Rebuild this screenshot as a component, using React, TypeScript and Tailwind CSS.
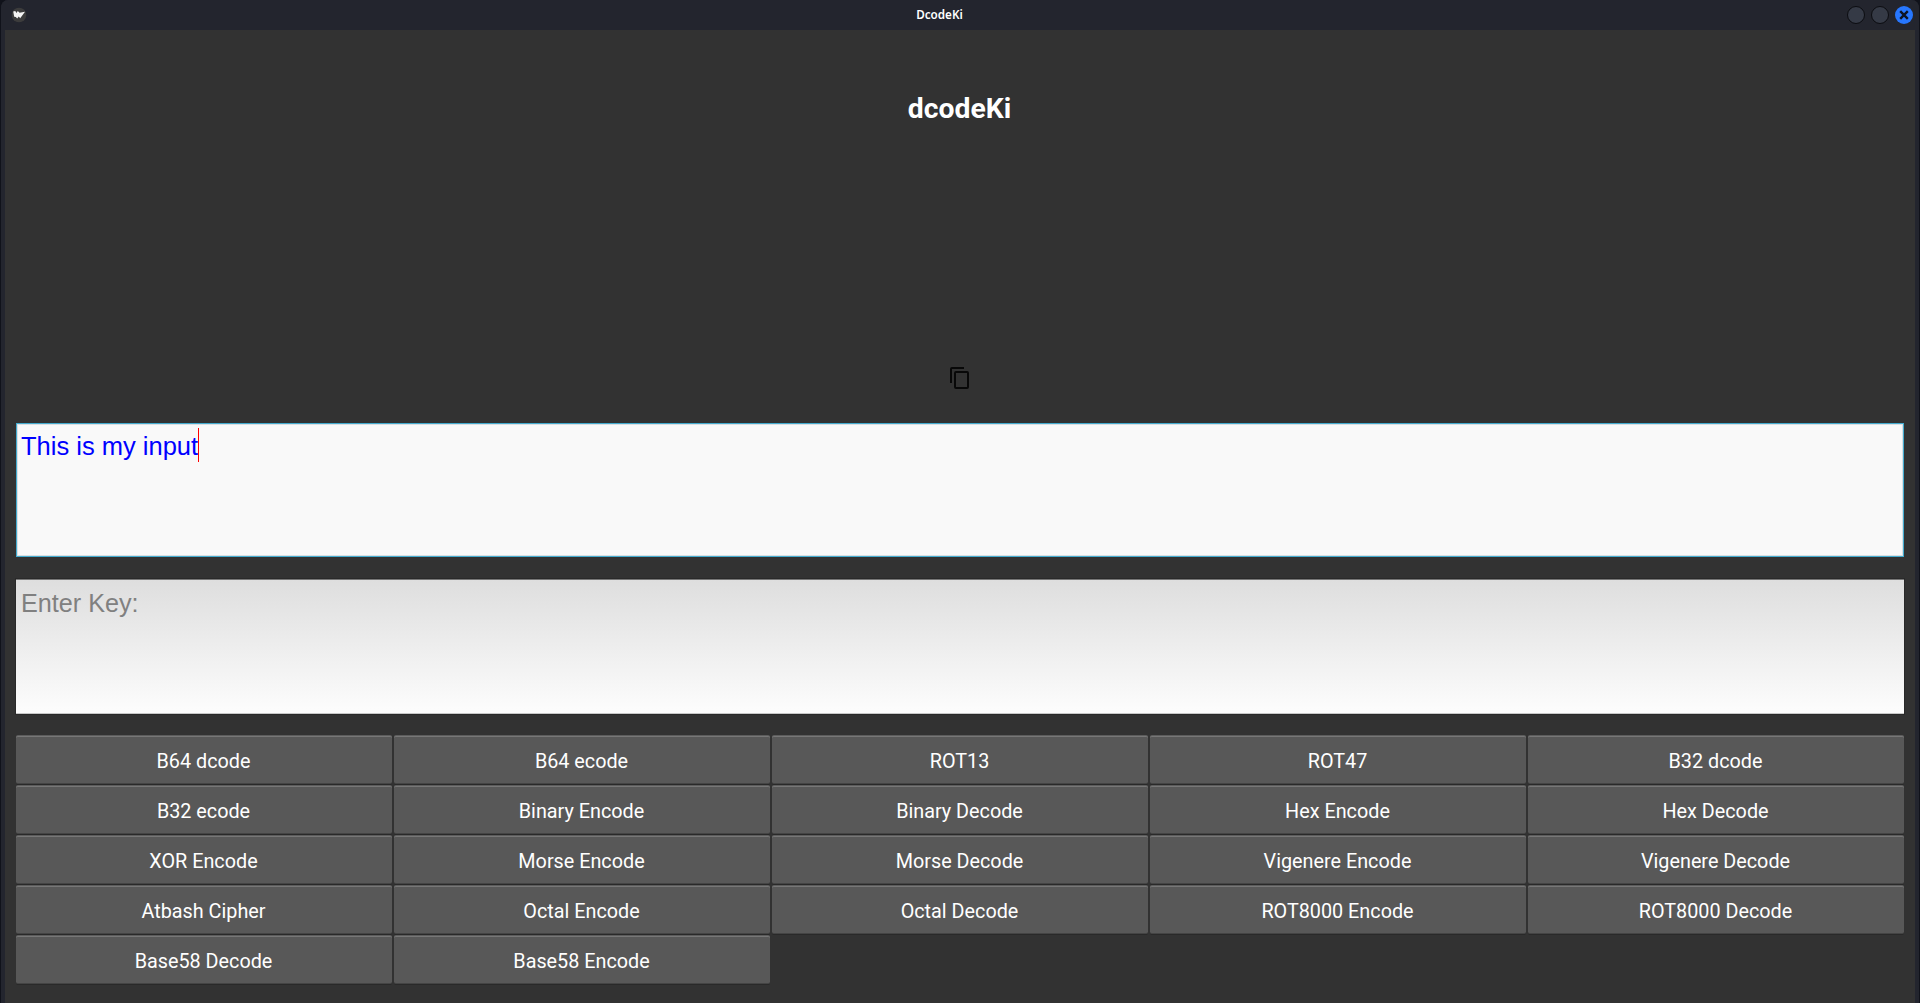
import React from "react";

const labels = [
  "B64 dcode", "B64 ecode", "ROT13", "ROT47", "B32 dcode",
  "B32 ecode", "Binary Encode", "Binary Decode", "Hex Encode", "Hex Decode",
  "XOR Encode", "Morse Encode", "Morse Decode", "Vigenere Encode", "Vigenere Decode",
  "Atbash Cipher", "Octal Encode", "Octal Decode", "ROT8000 Encode", "ROT8000 Decode",
  "Base58 Decode", "Base58 Encode",
];

function TitleBar() {
  return (
    <header className="grid h-[30px] shrink-0 grid-cols-[1fr_auto_1fr] items-center bg-[#23252e] pl-[10px] pr-[6px]">
      <svg width="16" height="16" viewBox="0 0 16 16">
        <circle cx="8" cy="8" r="7.3" fill="#3c3c3c" />
        <path d="M2.2 4.6 4.3 4.1 5.4 6 6.8 4.1 8.6 5.8 14 4.8 9.2 11.2 7.8 9.4 6.2 11.4 4.8 10 3.2 9.8Z" fill="#f4f4f4" />
      </svg>
      <span className="mr-[45px] pb-[2px] font-['Noto_Sans'] text-[11.7px] font-semibold leading-4 text-white">DcodeKi</span>
      <div className="flex justify-end gap-[6px]">
        <span className="size-[18px] rounded-full border border-[#0c0d11] bg-[#353a46]" />
        <span className="size-[18px] rounded-full border border-[#0c0d11] bg-[#353a46]" />
        <svg width="18" height="18" viewBox="0 0 18 18">
          <circle cx="9" cy="9" r="9" fill="#2777ff" />
          <path d="m5.2 5.2 7.6 7.6m0-7.6-7.6 7.6" stroke="#0d1423" strokeWidth="2.4" />
        </svg>
      </div>
    </header>
  );
}

export default function App() {
  return (
    <div className="flex h-[1003px] w-[1920px] flex-col overflow-hidden bg-[#10121a]">
      <div className="flex min-h-0 flex-1 flex-col overflow-hidden rounded-t-lg border-x border-[#10121a] bg-[#23252e]">
        <TitleBar />
        <main className="mx-1 flex flex-1 flex-col bg-[#323232] px-[11px]">
          <h1 className="mt-[62px] pr-px text-center font-[Roboto] text-[28.3px] font-bold leading-[34px] text-white">dcodeKi</h1>
          <button className="mx-auto mt-[240px] block size-6">
            <svg width="24" height="24" viewBox="0 0 24 24" fill="#080808">
              <path d="M16 1H4a2 2 0 0 0-2 2v14h2V3h12V1zm3 4H8a2 2 0 0 0-2 2v14a2 2 0 0 0 2 2h11a2 2 0 0 0 2-2V7a2 2 0 0 0-2-2zm0 16H8V7h11v14z" />
            </svg>
          </button>
          <div className="mt-[33px] flex h-[134px] shrink-0 items-start border border-[#43abcf] bg-[#f9f9f9] pl-1 pt-1 shadow-[inset_0_0_0_1px_#d9dfe2]">
            <span className="whitespace-pre font-['Liberation_Sans'] text-[25.5px] leading-[36px] text-[#0000ff]">This is my input</span>
            <span className="h-[34px] w-px bg-[#ff0000]" />
          </div>
          <div className="mt-[22px] h-[135px] shrink-0 border-y border-t-[#777777] border-b-[#c8c8c8] bg-linear-to-b from-[#dedede] to-[#fdfdfd] pl-[5px] pt-[5px] font-['Liberation_Sans'] text-[25.2px] leading-[36px] text-[#808080] shadow-[0_0_0_1px_#292929]">
            Enter Key:
          </div>
          <div className="mt-[21px] grid auto-rows-[49px] grid-cols-5 gap-x-[2px] gap-y-px">
            {labels.map((label) => (
              <button
                key={label}
                className="rounded-[2px] border-t border-b border-t-[#5c5c5c] border-b-[#444444] bg-[#585858] pt-[5px] pr-px font-[Roboto] text-[19.8px] text-white shadow-[0_1px_0_#292929,inset_0_1px_0_#777777]"
              >
                {label}
              </button>
            ))}
          </div>
        </main>
      </div>
    </div>
  );
}
